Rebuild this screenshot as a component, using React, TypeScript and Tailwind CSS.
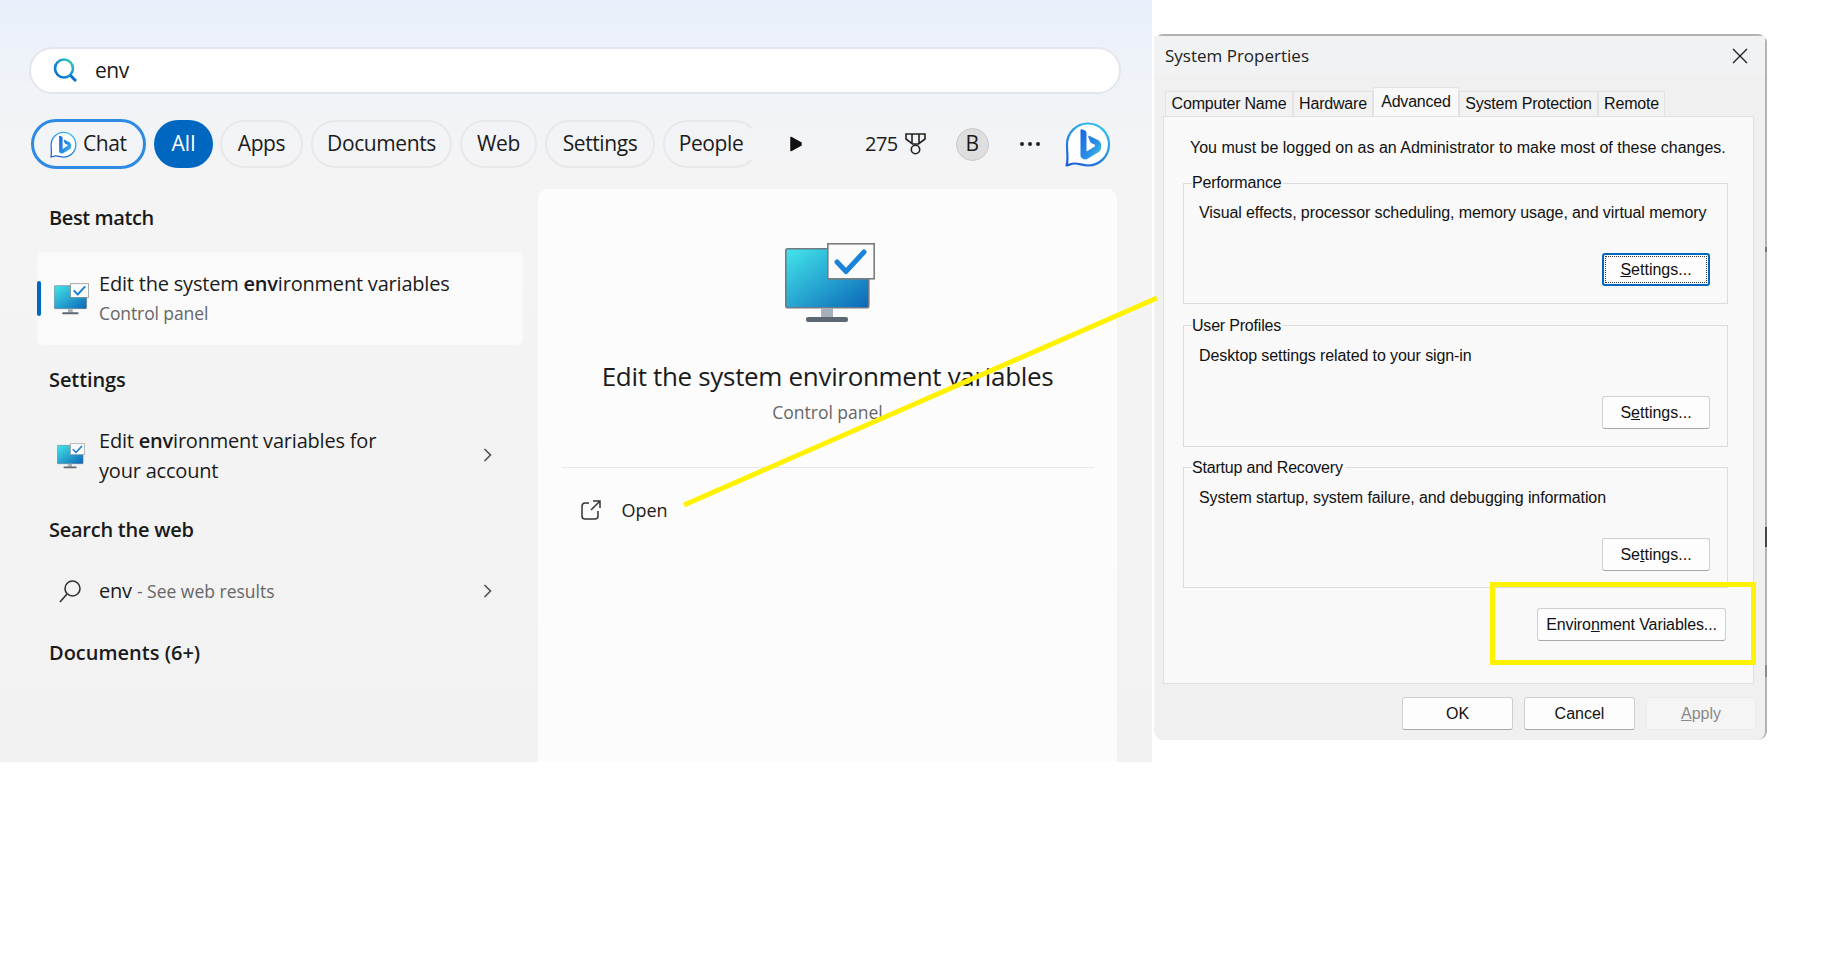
import React from 'react';

const BingIcon: React.FC<{ id: string; className?: string }> = ({ id, className = "" }) => (
    <svg viewBox="0 0 46 46" className={className}>
        <defs>
            <linearGradient id={`${id}-ring`} x1="0.8" y1="0" x2="0.2" y2="1">
                <stop offset="0" stopColor="#2fc0f2" />
                <stop offset="1" stopColor="#1d5fd6" />
            </linearGradient>
            <linearGradient id={`${id}-b`} x1="0" y1="0" x2="1" y2="1">
                <stop offset="0" stopColor="#1b63e0" />
                <stop offset="0.6" stopColor="#2a8fe8" />
                <stop offset="1" stopColor="#42d2dc" />
            </linearGradient>
        </defs>
        <path d="M1.5 44.5C3.5 39 2 33 2 23.5A21 21 0 1 1 23 44.5C18 44.5 14 42.5 10 42.5C7 42.5 4 43.8 1.5 44.5Z" fill="#fff" stroke={`url(#${id}-ring)`} strokeWidth="2.2" strokeLinejoin="round" />
        <path d="M15.5 9.5C15.5 8.5 16.5 8 17.5 8.5L20 9.5C21 10 21.5 10.8 21.5 12V30.5L29 26C30.5 25 30.5 23.8 29 23.2L26.5 22.2C25.8 21.9 25.5 21.5 25.2 20.8L23.3 16C23 15 23.8 14.6 24.6 15L33 19C35 20 36.2 22 36.2 24.5V26C36.2 28.5 35 30.4 33 31.6L23 37.6C21 38.8 19 38.8 17.5 37.6L16.5 36.8C15.8 36.2 15.5 35.3 15.5 34.4Z" fill={`url(#${id}-b)`} />
    </svg>
);

const MonitorIcon: React.FC<{ id: string; className?: string }> = ({ id, className = "" }) => (
    <svg viewBox="0 0 90 80" className={className}>
        <defs>
            <linearGradient id={id} x1="0" y1="0" x2="1" y2="1">
                <stop offset="0" stopColor="#43e6ea" />
                <stop offset="1" stopColor="#0b66b8" />
            </linearGradient>
        </defs>
        <rect x="0.8" y="5.8" width="83" height="59" rx="2" fill={`url(#${id})`} stroke="#6f7a85" strokeWidth="1.6" />
        <rect x="36" y="65" width="12" height="10" fill="#a5b0ba" />
        <rect x="21" y="74" width="42" height="5" rx="2" fill="#5d6873" />
        <rect x="42.8" y="0.8" width="46.4" height="35" fill="#fbfbfb" stroke="#7c7c7c" strokeWidth="1.6" />
        <path d="M52 19L61 28.5L79 9" fill="none" stroke="#1a82d8" strokeWidth="5" strokeLinecap="round" strokeLinejoin="round" />
    </svg>
);

const Chevron: React.FC = () => (
    <svg viewBox="0 0 9 14" className="w-[9px] h-[14px]">
        <path d="M1.5 1L7.5 7L1.5 13" fill="none" stroke="#555" strokeWidth="1.7" />
    </svg>
);

const Pill: React.FC<{ label: string; className: string }> = ({ label, className }) => (
    <div className={`h-[48px] rounded-full border-2 border-[#e8e8e8] flex items-center justify-center text-[21px] tracking-[-0.4px] text-[#1b1b1b] ${className}`}>
        {label}
    </div>
);

const Heading: React.FC<{ children: React.ReactNode; className: string }> = ({ children, className }) => (
    <h3 className={`pl-[12px] h-[30px] leading-[30px] text-[20px] font-semibold text-[#1a1a1a] ${className}`}>{children}</h3>
);

const DlgButton: React.FC<{ children: React.ReactNode; className?: string }> = ({ children, className = "" }) => (
    <div className={`h-[33px] rounded-[3px] bg-[#fdfdfd] border border-[#cfcfcf] border-b-[#a9a9a9] flex items-center justify-center text-[#111] ${className}`}>
        {children}
    </div>
);

const GroupBox: React.FC<{ title: string; desc: string; className: string; legendClass: string; descClass: string; children: React.ReactNode }> = ({ title, desc, className, legendClass, descClass, children }) => (
    <div className={`relative w-[545px] border border-[#dcdcdc] pl-[15px] pr-[17px] ${className}`}>
        <span className={`absolute left-[8px] bg-[#f9f9f9] pr-[2px] leading-[20px] tracking-[-0.2px] ${legendClass}`}>{title}</span>
        <p className={`leading-[20px] tracking-[-0.1px] ${descClass}`}>{desc}</p>
        <div className="flex justify-end">{children}</div>
    </div>
);

const Tab: React.FC<{ label: string; className: string }> = ({ label, className }) => (
    <div className={`h-[25px] bg-[#f2f2f2] border border-b-0 border-[#e2e2e2] flex items-center justify-center tracking-[-0.2px] ${className}`}>{label}</div>
);

export default function App() {
    return (
        <div className="relative w-[1844px] h-[963px] bg-white overflow-hidden flex items-start">
            {/* search window */}
            <div className="w-[1152px] h-[762px] shrink-0 pt-[47px] bg-[linear-gradient(180deg,#e9f0fb_0px,#f0f3f8_90px,#f4f4f5_170px,#f2f2f3_100%)] font-['Open_Sans',sans-serif]">
                <div className="ml-[29px] w-[1092px] h-[47px] rounded-full bg-white border-2 border-[#e3e6ec] flex items-center">
                    <svg viewBox="0 0 24 25" className="ml-[22px] w-[24px] h-[25px]">
                        <defs>
                            <linearGradient id="searchRing" x1="1" y1="0" x2="0" y2="1">
                                <stop offset="0" stopColor="#3ed6a8" />
                                <stop offset="0.5" stopColor="#1090d8" />
                                <stop offset="1" stopColor="#0a6cc8" />
                            </linearGradient>
                        </defs>
                        <circle cx="11" cy="10.5" r="9" fill="none" stroke="url(#searchRing)" strokeWidth="2.6" />
                        <path d="M17.5 17.5L23 23" stroke="#0a6cc8" strokeWidth="3" />
                    </svg>
                    <span className="ml-[18px] text-[21px] text-[#1b1b1b] tracking-[-0.5px]">env</span>
                </div>

                <div className="mt-[25px] ml-[31px] h-[50px] flex items-center">
                    <div className="w-[115px] h-[50px] rounded-full border-[3px] border-[#2e8ae2] flex items-center text-[21px] tracking-[-0.4px] text-[#1b1b1b] pl-[16px] gap-[6px]">
                        <BingIcon id="chatBing" className="w-[27px] h-[27px]" />
                        <span>Chat</span>
                    </div>
                    <div className="ml-[8px] w-[59px] h-[48px] rounded-full bg-[#0067c0] flex items-center justify-center text-[21px] text-white">All</div>
                    <Pill label="Apps" className="ml-[7px] w-[83px]" />
                    <Pill label="Documents" className="ml-[8px] w-[141px]" />
                    <Pill label="Web" className="ml-[8px] w-[77px]" />
                    <Pill label="Settings" className="ml-[8px] w-[110px]" />
                    <Pill label="People" className="ml-[8px] w-[96px] border-r-transparent" />
                    <svg viewBox="0 0 12 16" className="ml-[31px] w-[12px] h-[16px]">
                        <path d="M1 1.5L11 7L11 9L1 14.5Z" fill="#111" stroke="#111" strokeWidth="1.5" strokeLinejoin="round" />
                    </svg>
                    <span className="ml-[63px] text-[20px] text-[#1b1b1b] tracking-[-0.5px]">275</span>
                    <svg viewBox="0 0 21 22" className="ml-[7px] w-[21px] h-[22px]">
                        <path d="M1 1H20V6L13.5 11H7.5L1 6ZM7 1V10M14 1V10" fill="none" stroke="#222" strokeWidth="1.6" />
                        <circle cx="10.5" cy="16.5" r="4.2" fill="none" stroke="#222" strokeWidth="1.6" />
                    </svg>
                    <div className="ml-[30px] w-[33px] h-[33px] rounded-full bg-[#dedede] border border-[#c9c9c9] flex items-center justify-center text-[21px] text-[#1b1b1b]">B</div>
                    <div className="ml-[31px] w-[20px] flex justify-between">
                        <span className="w-[4px] h-[4px] rounded-full bg-[#222]" />
                        <span className="w-[4px] h-[4px] rounded-full bg-[#222]" />
                        <span className="w-[4px] h-[4px] rounded-full bg-[#222]" />
                    </div>
                    <BingIcon id="bigBing" className="ml-[25px] w-[46px] h-[46px]" />
                </div>

                <div className="mt-[20px] flex">
                    <div className="ml-[37px] w-[486px]">
                        <Heading className="mt-[14px] tracking-[-0.4px]">Best match</Heading>
                        <div className="relative mt-[19px] h-[93px] rounded-[6px] bg-[#fafafb] flex items-start pt-[17px] pl-[17px]">
                            <span className="absolute left-0 top-[29px] w-[4px] h-[35px] rounded-full bg-[#0067c0]" />
                            <MonitorIcon id="monA" className="w-[35px] h-[32px] mt-[14px]" />
                            <div className="ml-[10px]">
                                <p className="text-[20px] leading-[30px] tracking-[-0.2px] text-[#1b1b1b]">Edit the system <b className="font-semibold">env</b>ironment variables</p>
                                <p className="text-[17.5px] leading-[28px] tracking-[-0.1px] text-[#666]">Control panel</p>
                            </div>
                        </div>
                        <Heading className="mt-[20px] tracking-[-0.1px]">Settings</Heading>
                        <div className="mt-[31px] h-[60px] flex items-center pl-[20px] pr-[31px]">
                            <MonitorIcon id="monB" className="w-[28px] h-[26px]" />
                            <p className="ml-[14px] flex-1 text-[20px] leading-[30px] tracking-[-0.2px] text-[#1b1b1b]">Edit <b className="font-semibold">env</b>ironment variables for<br />your account</p>
                            <span className="mb-[2px] flex"><Chevron /></span>
                        </div>
                        <Heading className="mt-[29px] tracking-[-0.25px]">Search the web</Heading>
                        <div className="mt-[31px] h-[30px] flex items-center pl-[22px] pr-[31px]">
                            <svg viewBox="0 0 22 23" className="w-[22px] h-[23px]">
                                <circle cx="13.5" cy="8.5" r="7.5" fill="none" stroke="#333" strokeWidth="1.6" />
                                <path d="M8 14L1 22" stroke="#333" strokeWidth="1.6" />
                            </svg>
                            <p className="ml-[18px] flex-1 text-[20px] tracking-[-0.2px] text-[#1b1b1b]">env <span className="text-[17.5px] tracking-normal text-[#666]">- See web results</span></p>
                            <Chevron />
                        </div>
                        <Heading className="mt-[32px] tracking-normal">Documents (6+)</Heading>
                    </div>

                    <div className="ml-[15px] w-[579px] h-[573px] rounded-t-[10px] bg-[#fcfcfc] flex flex-col items-center">
                        <MonitorIcon id="monC" className="mt-[54px] ml-[5px] w-[90px] h-[80px]" />
                        <p className="mt-[34px] text-[26px] leading-[38px] tracking-[-0.32px] text-[#1b1b1b]">Edit the system environment variables</p>
                        <p className="mt-[3px] text-[17.5px] leading-[28px] text-[#666]">Control panel</p>
                        <div className="mt-[41px] w-[532px] border-t border-[#e8e8e8] flex items-center pt-[32px] pl-[19px]">
                            <svg viewBox="0 0 20 20" className="w-[20px] h-[20px]">
                                <path d="M8 3H4A3 3 0 0 0 1 6V16A3 3 0 0 0 4 19H14A3 3 0 0 0 17 16V11M12 1H19V8M19 1L10 10" fill="none" stroke="#333" strokeWidth="1.5" />
                            </svg>
                            <span className="ml-[21px] text-[18px] leading-[20px] text-[#1b1b1b]">Open</span>
                        </div>
                    </div>
                </div>
            </div>

            {/* System Properties dialog */}
            <div className="relative ml-[2px] mt-[34px] w-[613px] h-[706px] shrink-0 rounded-[9px] bg-[#f0f0f0] border-t-2 border-r-2 border-[#b3b3b3] font-['Liberation_Sans',sans-serif] text-[16px] text-[#111]">
                <span className="absolute -right-[2px] top-[211px] w-[2px] h-[5px] bg-[#777]" />
                <span className="absolute -right-[2px] top-[491px] w-[2px] h-[20px] bg-[#444]" />
                <span className="absolute -right-[2px] top-[629px] w-[2px] h-[12px] bg-[#8a8a8a]" />
                <div className="h-[40px] bg-[#f1f2f4] flex items-center justify-between pl-[11px] pr-[17px]">
                    <span className="text-[17px] font-['Open_Sans',sans-serif] text-[#222]">System Properties</span>
                    <svg viewBox="0 0 16 16" className="w-[16px] h-[16px]">
                        <path d="M1 1L15 15M15 1L1 15" stroke="#222" strokeWidth="1.4" />
                    </svg>
                </div>
                <div className="ml-[11px] h-[40px] flex items-end">
                    <Tab label="Computer Name" className="w-[128px]" />
                    <Tab label="Hardware" className="w-[80px]" />
                    <Tab label="Advanced" className="w-[86px] h-[29px] bg-[#f9f9f9] relative z-10" />
                    <Tab label="System Protection" className="w-[139px]" />
                    <Tab label="Remote" className="w-[67px]" />
                </div>
                <div className="ml-[9px] w-[591px] h-[568px] bg-[#f9f9f9] border border-[#e0e0e0] pl-[19px]">
                    <p className="pl-[7px] pt-[21px] leading-[20px] h-[66px]">You must be logged on as an Administrator to make most of these changes.</p>
                    <GroupBox title="Performance" desc="Visual effects, processor scheduling, memory usage, and virtual memory" className="h-[121px]" legendClass="-top-[11px]" descClass="pt-[19px] h-[69px]">
                        <div className="w-[108px] h-[33px] rounded-[3px] bg-[#fdfdfd] border-2 border-[#0067c0] p-[1px]">
                            <div className="h-full border border-dotted border-[#333] flex items-center justify-center"><span><span className="underline">S</span>ettings...</span></div>
                        </div>
                    </GroupBox>
                    <GroupBox title="User Profiles" desc="Desktop settings related to your sign-in" className="mt-[21px] h-[122px]" legendClass="-top-[10px]" descClass="pt-[20px] h-[70px]">
                        <DlgButton className="w-[108px]"><span>S<span className="underline">e</span>ttings...</span></DlgButton>
                    </GroupBox>
                    <GroupBox title="Startup and Recovery" desc="System startup, system failure, and debugging information" className="mt-[20px] h-[121px]" legendClass="-top-[10px]" descClass="pt-[20px] h-[70px]">
                        <DlgButton className="w-[108px]"><span>Se<span className="underline">t</span>tings...</span></DlgButton>
                    </GroupBox>
                    <div className="mt-[20px] w-[543px] flex justify-end">
                        <DlgButton className="w-[189px] tracking-[-0.1px]"><span>Enviro<span className="underline">n</span>ment Variables...</span></DlgButton>
                    </div>
                </div>
                <div className="mt-[13px] pr-[9px] flex justify-end gap-[11px]">
                    <DlgButton className="w-[111px]">OK</DlgButton>
                    <DlgButton className="w-[111px]">Cancel</DlgButton>
                    <div className="w-[110px] h-[33px] rounded-[3px] bg-[#f5f5f5] border border-[#ececec] flex items-center justify-center text-[#8a8a8a]"><span><span className="underline">A</span>pply</span></div>
                </div>
            </div>

            {/* annotations */}
            <svg className="absolute left-0 top-0 w-[1844px] h-[963px] pointer-events-none" viewBox="0 0 1844 963">
                <path d="M684 505L1157 298" stroke="#fff200" strokeWidth="5" />
            </svg>
            <div className="absolute left-[1490px] top-[582px] w-[266px] h-[83px] border-[5px] border-[#fff200]" />
        </div>
    );
}
